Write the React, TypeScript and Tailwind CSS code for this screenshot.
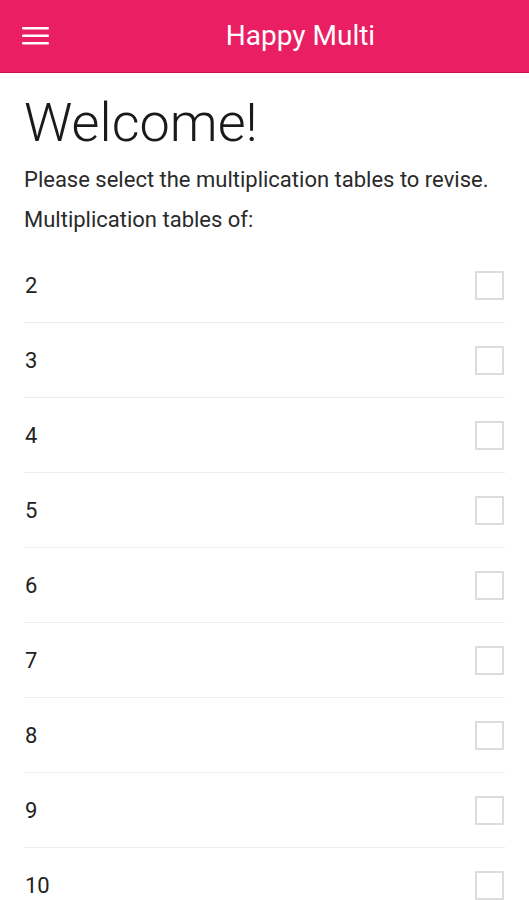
const tables = [2, 3, 4, 5, 6, 7, 8, 9, 10];

function MenuIcon() {
  return (
    <svg width="28" height="20" viewBox="0 0 28 20" fill="#fff">
      <rect x="0" y="1" width="27" height="2.6" rx="1" />
      <rect x="0" y="8.5" width="27" height="2.6" rx="1" />
      <rect x="0" y="16" width="27" height="2.6" rx="1" />
    </svg>
  );
}

function TableRow({ n }: { n: number }) {
  return (
    <li className="flex items-center justify-between h-[75px] border-b border-[#ececec]">
      <span className="text-[22px] text-[#222] pl-px">{n}</span>
      <span className="w-[29px] h-[29px] border-2 border-[#dcdcdc] rounded-[1px] mr-px" />
    </li>
  );
}

export default function App() {
  return (
    <div className="w-[529px] h-[900px] overflow-hidden bg-white font-['Roboto',sans-serif]">
      <header className="flex items-center h-[73px] bg-[#e91e63] border-b border-[#c8134f]">
        <button
          type="button"
          aria-label="Menu"
          className="w-[72px] h-full flex items-center pl-[22px]"
        >
          <MenuIcon />
        </button>
        <h1 className="flex-1 text-center text-white text-[28px] leading-[36px] pb-[1px]">Happy Multi</h1>
      </header>

      <main className="px-6">
        <h2 className="text-[54px] font-light leading-none text-[#1a1a1a] mt-[23px]">Welcome!</h2>
        <p className="text-[22px] text-[#2a2a2a] mt-[16px] leading-[28px]">
          Please select the multiplication tables to revise.
        </p>
        <p className="text-[22px] text-[#2a2a2a] mt-[12px] leading-[28px]">Multiplication tables of:</p>

        <ul className="mt-[14px]">
          {tables.map((n) => (
            <TableRow key={n} n={n} />
          ))}
        </ul>
      </main>
    </div>
  );
}
